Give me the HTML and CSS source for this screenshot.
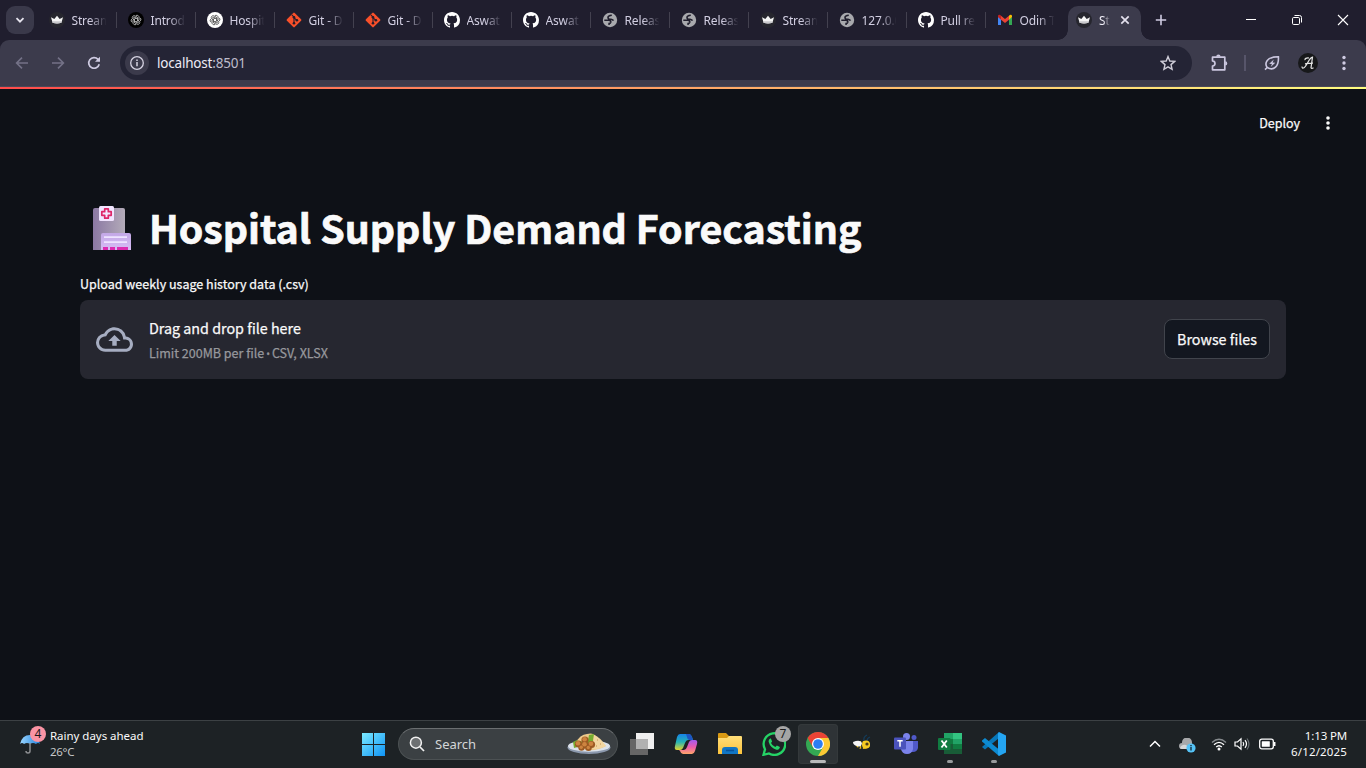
FILE: index.html
```html
<!DOCTYPE html>
<html lang="en">
<head>
<meta charset="utf-8">
<title>Hospital Supply Demand Forecasting</title>
<link rel="stylesheet" href="styles.css">
</head>
<body>
<svg class="defs" width="0" height="0">
  <defs>
    <linearGradient id="win" x1="0" y1="0" x2="1" y2="1"><stop offset="0" stop-color="#7beaff"/><stop offset="1" stop-color="#0f93f5"/></linearGradient>
    <linearGradient id="tower" x1="0" y1="0" x2="1" y2="0"><stop offset="0" stop-color="#8b78a3"/><stop offset="1" stop-color="#b3abb9"/></linearGradient>
    <linearGradient id="wing" x1="0" y1="0" x2="0" y2="1"><stop offset="0" stop-color="#c3a8e6"/><stop offset="1" stop-color="#d6bcf5"/></linearGradient>
    <linearGradient id="copA" x1="0" y1="0" x2="0" y2="1"><stop offset="0" stop-color="#1683e8"/><stop offset=".5" stop-color="#25b3b5"/><stop offset="1" stop-color="#e4d52c"/></linearGradient>
    <linearGradient id="copB" x1="0" y1="0" x2="0" y2="1"><stop offset="0" stop-color="#a35af1"/><stop offset=".5" stop-color="#ea5bad"/><stop offset="1" stop-color="#ffa568"/></linearGradient>
    <linearGradient id="fold" x1="0" y1="0" x2="0" y2="1"><stop offset="0" stop-color="#ffdf7a"/><stop offset="1" stop-color="#fcc33c"/></linearGradient>
    <linearGradient id="umb" x1="0" y1="0" x2="1" y2="0"><stop offset="0" stop-color="#9bd6ff"/><stop offset="1" stop-color="#2283dc"/></linearGradient>
  </defs>
  <symbol id="crown" viewBox="0 0 16 16"><circle cx="8" cy="8" r="8" fill="#26262e"/><path d="M2 5.2 5.3 7 8 3.8 10.7 7 14 5.2 12.4 10.8Q8 12 3.6 10.8Z" fill="#f5f5f5"/><path d="M3.2 9.3h9.6l-.4 1.5Q8 12 3.6 10.8Z" fill="#c9c9cc"/></symbol>
  <symbol id="knot" viewBox="0 0 16 16"><g fill="none" stroke="currentColor" stroke-width=".9"><path id="petal" d="M8 2.6C10 1.8 11.8 3.2 11.6 5.2L11.6 8.2 8 10.3"/><use href="#petal" transform="rotate(60 8 8)"/><use href="#petal" transform="rotate(120 8 8)"/><use href="#petal" transform="rotate(180 8 8)"/><use href="#petal" transform="rotate(240 8 8)"/><use href="#petal" transform="rotate(300 8 8)"/></g></symbol>
  <symbol id="gpt-dark" viewBox="0 0 16 16"><circle cx="8" cy="8" r="8" fill="#000"/><g color="#ddd" transform="translate(1.3 1.3) scale(.84)"><use href="#knot" width="16" height="16"/></g></symbol>
  <symbol id="gpt-light" viewBox="0 0 16 16"><circle cx="8" cy="8" r="8" fill="#fff"/><g color="#333" transform="translate(1.3 1.3) scale(.84)"><use href="#knot" width="16" height="16"/></g></symbol>
  <symbol id="git" viewBox="0 0 16 16"><rect x="2.5" y="2.5" width="11" height="11" rx="1" transform="rotate(45 8 8)" fill="#f8502a"/><path d="M5.8 2.8 8 5v6.3M8 5.6l2.800 2.800" stroke="#241c2b" stroke-width="1.1" fill="none"/><circle cx="8" cy="5.2" r="1.3" fill="#241c2b"/><circle cx="8" cy="11.2" r="1.3" fill="#241c2b"/><circle cx="10.9" cy="8.2" r="1.3" fill="#241c2b"/></symbol>
  <symbol id="github" viewBox="0 0 16 16"><path fill="#fff" d="M8 0C3.58 0 0 3.58 0 8c0 3.54 2.29 6.53 5.47 7.59.4.07.55-.17.55-.38v-1.49c-2.01.37-2.53-.49-2.69-.94-.09-.23-.48-.94-.82-1.13-.28-.15-.68-.52-.01-.53.63-.01 1.08.58 1.23.82.72 1.21 1.87.87 2.33.66.07-.52.28-.87.51-1.07-1.78-.2-3.64-.89-3.64-3.95 0-.87.31-1.59.82-2.15-.08-.2-.36-1.02.08-2.12 0 0 .67-.21 2.2.82a7.6 7.6 0 0 1 4 0c1.53-1.04 2.2-.82 2.2-.82.44 1.1.16 1.92.08 2.12.51.56.82 1.27.82 2.15 0 3.07-1.87 3.75-3.65 3.95.29.25.54.73.54 1.48v2.2c0 .21.15.46.55.38A8.01 8.01 0 0 0 16 8c0-4.42-3.58-8-8-8z"/></symbol>
  <symbol id="globe" viewBox="0 0 16 16"><circle cx="8" cy="8" r="7.200" fill="#a8a9ad"/><path d="M9.600 2.300 6.600 3.800Q5.800 5.800 8 6.300l2.600.6 1.200 1.500 1.900-.6Q14 3.600 9.600 2.300z" fill="#a8a9ad"/><path d="M9.800 3.200Q6 3.400 6 5.500t3 1.800q2 .4 2.500 1.400M2.300 8.300h4.500q2.200.200 2 1.900-.200 1.200-1.700 1.300V13" fill="none" stroke="#201e2d" stroke-width="1.600"/></symbol>
  <symbol id="gmail" viewBox="0 0 16 16"><path d="M1 5v8h3V6z" fill="#4285f4"/><path d="M12 6v7h3V5z" fill="#34a853"/><path d="M4 3.800 8 7l4-3.200v4L8 11 4 7.800z" fill="#ea4335"/><path d="M1 5V4q.3-2 2.400-1L4 3.800v4z" fill="#c5221f"/><path d="M15 5V4q-.3-2-2.400-1L12 3.800v4z" fill="#fbbc04"/></symbol>
</svg>

<header class="tabstrip">
  <button class="tabsearch"><svg width="12" height="12" viewBox="0 0 12 12"><path d="M2.500 4.200 6 7.700l3.500-3.500" fill="none" stroke="#e6e4ee" stroke-width="1.800"/></svg></button>
  <nav class="tabs">
    <div class="tab"><svg class="fav"><use href="#crown"/></svg><span>Stream</span></div>
    <div class="tab"><svg class="fav"><use href="#gpt-dark"/></svg><span>Introd</span></div>
    <div class="tab"><svg class="fav"><use href="#gpt-light"/></svg><span>Hospit</span></div>
    <div class="tab"><svg class="fav"><use href="#git"/></svg><span>Git - D</span></div>
    <div class="tab"><svg class="fav"><use href="#git"/></svg><span>Git - D</span></div>
    <div class="tab"><svg class="fav"><use href="#github"/></svg><span>Aswat</span></div>
    <div class="tab"><svg class="fav"><use href="#github"/></svg><span>Aswat</span></div>
    <div class="tab"><svg class="fav"><use href="#globe"/></svg><span>Releas</span></div>
    <div class="tab"><svg class="fav"><use href="#globe"/></svg><span>Releas</span></div>
    <div class="tab"><svg class="fav"><use href="#crown"/></svg><span>Stream</span></div>
    <div class="tab"><svg class="fav"><use href="#globe"/></svg><span>127.0.0</span></div>
    <div class="tab"><svg class="fav"><use href="#github"/></svg><span>Pull re</span></div>
    <div class="tab last"><svg class="fav"><use href="#gmail"/></svg><span>Odin T</span></div>
    <div class="tab active"><svg class="fav"><use href="#crown"/></svg><span>St</span><svg class="close" viewBox="0 0 10 10"><path d="M1.300 1.300l7.400 7.400M8.700 1.300 1.300 8.700" stroke="#e4e1ee" stroke-width="1.700"/></svg></div>
  </nav>
  <svg class="plus" viewBox="0 0 12 12"><path d="M6 .8v10.400M.8 6h10.400" stroke="#cfcbe2" stroke-width="1.600"/></svg>
  <div class="wincontrols">
    <svg width="12" height="12" viewBox="0 0 12 12"><path d="M1 5.500h10" stroke="#fff"/></svg>
    <svg width="12" height="12" viewBox="0 0 12 12"><rect x="1.500" y="3.500" width="7" height="7" rx="1.200" fill="none" stroke="#fff"/><path d="M3.500 1.500h5q2 0 2 2v5" fill="none" stroke="#fff"/></svg>
    <svg width="12" height="12" viewBox="0 0 12 12"><path d="M1 1l10 10M11 1 1 11" stroke="#fff" stroke-width="1.100"/></svg>
  </div>
</header>

<div class="toolbarwrap"><div class="toolbar">
  <svg class="nav" viewBox="0 0 16 16"><path d="M14 8H3M8 2.600 2.600 8 8 13.400" fill="none" stroke="#747287" stroke-width="1.600"/></svg>
  <svg class="nav" viewBox="0 0 16 16"><path d="M2 8h11M8 2.600 13.400 8 8 13.400" fill="none" stroke="#747287" stroke-width="1.600"/></svg>
  <svg class="nav" viewBox="0 0 16 16"><path d="M13.200 9.200A5.300 5.300 0 1 1 12 4.400L13.200 5.800" fill="none" stroke="#cfcbe2" stroke-width="1.700"/><path d="M14 1.800v5H9z" fill="#cfcbe2"/></svg>
  <div class="omnibox">
    <span class="info"><svg width="16" height="16" viewBox="0 0 16 16"><circle cx="8" cy="8" r="6.300" fill="none" stroke="#d6d3e2" stroke-width="1.300"/><path d="M8 7v4.300M8 4.400v1.500" stroke="#d6d3e2" stroke-width="1.500"/></svg></span>
    <span class="url">localhost<i>:8501</i></span>
    <svg class="star" viewBox="0 0 16 16"><path d="M8 1.600 9.800 6l4.900.4-3.700 3.200 1.100 4.700L8 11.800l-4.100 2.500L5 9.600 1.300 6.400 6.200 6z" fill="none" stroke="#cfcdd8" stroke-width="1.400"/></svg>
  </div>
  <svg class="ext" viewBox="0 0 18 18"><path d="M2.500 3.200h12.300v12.600H2.500v-3.700q2.500-.4 2.500-2.600T2.500 6.900z" fill="none" stroke="#cbc7df" stroke-width="1.700" stroke-linejoin="round"/><path d="M6.200 2.800a2.200 2.200 0 0 1 4.400 0zM15.200 7.300a2.100 2.100 0 0 1 0 4.200z" fill="#cbc7df"/></svg>
  <span class="sep"></span>
  <svg class="leaf" viewBox="0 0 16 16"><path d="M1 14.600 3.200 12.500M3.200 12.500C.2 8.200 2.600 1.600 14.400 1.800 15 11.500 9.800 16.200 3.200 12.500z" fill="none" stroke="#cbc7df" stroke-width="1.600"/><path d="M9.800 4.600 5.200 8.700l2.700.4-1.200 2.900 4.600-4.200-2.700-.4z" fill="#cbc7df"/></svg>
  <span class="avatar"><svg width="16" height="16" viewBox="0 0 16 16"><path d="M2 11.500q0 2.300 2 1.200C7 11 9 2.500 12.500 2.200L11 12.800q.5 1.200 2.500 0M5 8.800q4-.8 8-.6M5 5.200Q4.500 2.600 9 3" fill="none" stroke="#e5e5e5" stroke-width="1.200"/></svg></span>
  <svg class="dots" viewBox="0 0 4 16"><circle cx="2" cy="2.500" r="1.700"/><circle cx="2" cy="8" r="1.700"/><circle cx="2" cy="13.500" r="1.700"/></svg>
</div></div>

<main class="app">
  <div class="decoration"></div>
  <div class="appbar"><span class="deploy">Deploy</span><svg class="menu" viewBox="0 0 4 14"><circle cx="2" cy="2" r="1.800"/><circle cx="2" cy="7" r="1.800"/><circle cx="2" cy="12" r="1.800"/></svg></div>
  <section class="content">
    <h1><svg class="hospital" viewBox="0 0 39 44"><path d="M1 4q0-2 2-2h28q2 0 2 2v40H1z" fill="url(#tower)"/><path d="M9 44V29q0-2 2-2h26q2 0 2 2v15z" fill="url(#wing)"/><rect x="7" y="0" width="15" height="15" rx="1.500" fill="#f1e5ff"/><path d="M12.700 2.800h3.600v2.900h2.900v3.600h-2.900v2.900h-3.600V9.300H9.800V5.700h2.900z" fill="none" stroke="#de2669" stroke-width="1.700" stroke-linejoin="round"/><path d="M12 31.200h23M12 36.200h23" stroke="#eee3ff" stroke-width="1.800"/><path d="M11 41h5v3h-5zM18 41h5v3h-5zM25 41h11v3H25z" fill="#dc2bb0"/></svg><span>Hospital Supply Demand Forecasting</span></h1>
    <label class="label">Upload weekly usage history data (.csv)</label>
    <div class="dropzone">
      <svg class="cloud" viewBox="0 0 24 24"><path d="M19.350 10.040A7.490 7.490 0 0 0 12 4C9.110 4 6.600 5.640 5.350 8.040A5.994 5.994 0 0 0 0 14c0 3.310 2.690 6 6 6h13c2.760 0 5-2.240 5-5 0-2.640-2.050-4.780-4.650-4.960zM19 18H6c-2.210 0-4-1.790-4-4 0-2.050 1.530-3.760 3.560-3.970l1.070-.110.500-.950A5.469 5.469 0 0 1 12 6c2.620 0 4.880 1.860 5.390 4.430l.300 1.500 1.530.110A2.980 2.980 0 0 1 22 15c0 1.650-1.350 3-3 3zM8 13h2.550v3h2.900v-3H16l-4-4z"/></svg>
      <div class="hint"><span class="drag">Drag and drop file here</span><span class="limit">Limit 200MB per file <i>•</i> CSV, XLSX</span></div>
      <button class="browse">Browse files</button>
    </div>
  </section>
</main>

<footer class="taskbar">
  <div class="weather">
    <div class="umbrella"><svg width="20" height="20" viewBox="0 0 20 20"><path d="M0 10Q2 1 10 1t10 9q-2-2-4 0-3-2-6 0-3-2-6 0-2-2-4 0z" fill="url(#umb)"/><path d="M10 9v8q0 2-2 2t-2-2" fill="none" stroke="#8b8d90" stroke-width="1.500"/></svg><b class="badge pink">4</b></div>
    <div class="wtext"><span>Rainy days ahead</span><span class="dim">26°C</span></div>
  </div>
  <div class="center">
    <svg class="start" viewBox="0 0 23 23"><path d="M0 0h11v11H0zM12 0h11v11H12zM0 12h11v11H0zM12 12h11v11H12z" fill="url(#win)"/></svg>
    <div class="search">
      <svg width="16" height="16" viewBox="0 0 16 16"><circle cx="6.900" cy="6.700" r="5.500" fill="#6d7072" stroke="#f2f2f2" stroke-width="1.500"/><path d="M11 11l4 4" stroke="#f2f2f2" stroke-width="1.700"/></svg>
      <span>Search</span>
      <svg class="food" viewBox="0 0 44 22"><ellipse cx="22" cy="14.500" rx="21.500" ry="6.500" fill="#8b98ad"/><ellipse cx="22" cy="13" rx="21" ry="5.800" fill="#dce2ea"/><path d="M8 11Q13 1 20 1q6-2 10 3l9 9q-8 5-20 4z" fill="#edc98b"/><path d="M7 15 6 9l4-2 2 2 9-2 1-5 5-1-1 7-4 3z" fill="#76ad30"/><path d="M27 2q6 2 12 11-7 4-13 3z" fill="#f2d6a0"/><g fill="#9c5a23"><circle cx="18" cy="7" r="3.600"/><circle cx="11.500" cy="11" r="3.600"/><circle cx="18" cy="12" r="3.600"/><circle cx="24.500" cy="11.500" r="3.600"/><circle cx="14.500" cy="14.500" r="3.200"/><circle cx="21.500" cy="14.800" r="3.300"/></g><g fill="#cd8440"><circle cx="17.600" cy="6.300" r="2.300"/><circle cx="11" cy="10.300" r="2.300"/><circle cx="24" cy="10.800" r="2.300"/><circle cx="17.500" cy="11.300" r="2.300"/><circle cx="14.200" cy="14.200" r="1.700"/><circle cx="21.300" cy="14.500" r="1.700"/></g><path d="M30 7h1M33 11h1M29 13h1" stroke="#c6924c"/></svg>
    </div>
    <div class="apps">
      <div class="icon"><svg viewBox="0 0 24 24"><path d="M6 1h18v16H6z" fill="#efefef"/><path d="M0 7h18v16H0z" fill="#666"/><path d="M6 7h12v10H6z" fill="#b1b1b1"/></svg></div>
      <div class="icon"><svg viewBox="0 0 24 24"><path d="M6 2h9q2 0 3 3l1 3h-5q-2 0-3 3l-2 5q-1 2-3 2H3q-3 0-2-4L3 5q1-3 3-3z" fill="url(#copA)"/><path d="M12 2h3q2 0 3 3l1 3h-4q-2-1-2-3z" fill="#1d55c2"/><path d="M18 22H9q-2 0-3-3l-1-1h5q2 0 3-3l2-5q1-2 3-2h3q3 0 2 4l-2 7q-1 3-3 3z" fill="url(#copB)"/></svg></div>
      <div class="icon"><svg viewBox="0 0 24 24"><path d="M0 2q0-1 1-1h7l3 3h12v7H0z" fill="#d99a13"/><path d="M0 6h9l2-2h12q1 0 1 1v17H0z" fill="url(#fold)"/><path d="M4 22v-4q0-3 3-3h10q3 0 3 3v4z" fill="#1176c4"/><path d="M8 18.500h8" stroke="#07529b" stroke-width="1.500"/></svg></div>
      <div class="icon"><svg viewBox="0 0 24 24"><path d="M1.500 22.800 3 17.300A10.800 10.800 0 1 1 7 21.400z" fill="none" stroke="#25d366" stroke-width="2.300"/><path d="M8.300 6.500q-2 1-1.700 3.200 1.700 6 7.800 8 3 .3 3.500-2.800l-3-1.500-1.600 1.600q-3-1.200-4.300-4.100l1.100-1.500-1.200-2.900z" fill="#25d366"/></svg><b class="badge gray">7</b></div>
      <div class="icon current"><svg viewBox="0 0 24 24"><circle cx="12" cy="12" r="12" fill="#34a853"/><path d="M12 6h10.400A12 12 0 0 1 12 24l5.200-9z" fill="#fcc934"/><path d="M12 6h10.400A12 12 0 0 0 1.600 6l5.200 9z" fill="#ea4335"/><circle cx="12" cy="12" r="6" fill="#fff"/><circle cx="12" cy="12" r="4.800" fill="#2b7df3"/></svg><i class="mark wide"></i></div>
      <div class="icon"><svg viewBox="0 0 24 24"><path d="M14 9q-1-4 3-6M17 9q0-3 3-4" fill="none" stroke="#143b58" stroke-width="1.300"/><ellipse cx="13" cy="13" rx="7" ry="4" fill="#edbd16"/><path d="M9 10v6M12 9v8" stroke="#1d2830" stroke-width="1.700"/><path d="M3 10q7-3 9 1-1 5-5 3-4-1-4-4z" fill="#f4f5f6"/><circle cx="16" cy="12.500" r="4" fill="#f5cb22"/><circle cx="17" cy="12" r="1.600" fill="#4a3b18"/></svg></div>
      <div class="icon"><svg viewBox="0 0 24 24"><circle cx="12.500" cy="4.500" r="3.500" fill="#7b83eb"/><circle cx="20" cy="5.500" r="2.500" fill="#5059c9"/><path d="M16 9h8v7q-1 4-5 4h-3z" fill="#5059c9"/><path d="M7 9h12v8q-1 5-6 5t-6-5z" fill="#7b83eb"/><rect x="0" y="5.500" width="12" height="12" rx="1" fill="#4b53bc"/><path d="M3.300 8.800h5.400M6 8.800v6" stroke="#fff" stroke-width="1.500"/></svg></div>
      <div class="icon"><svg viewBox="0 0 24 24"><path d="M6 1h18v21H6z" fill="#185c37"/><path d="M6 1h9v6H6z" fill="#21a366"/><path d="M15 1h9v6h-9z" fill="#33c481"/><path d="M6 7h9v5H6z" fill="#107c41"/><path d="M15 7h9v5h-9z" fill="#21a366"/><path d="M15 12h9v5h-9z" fill="#107c41"/><rect x="0" y="6" width="12.500" height="12" rx="1" fill="#107c41"/><path d="M3.500 8.500l5.300 7M8.800 8.500l-5.300 7" stroke="#fff" stroke-width="1.800"/></svg><i class="mark"></i></div>
      <div class="icon"><svg viewBox="0 0 24 24"><path d="M17 0v6L3 17.500 0 15z" fill="#0877b9"/><path d="M0 8.500 3 6l14 11.500V24L0 9.500z" fill="#0d8bd2"/><path d="M17 0l7 3.500v17L17 24q-1-1-1-2V2q0-1 1-2z" fill="#24a5f2"/></svg><i class="mark"></i></div>
    </div>
  </div>
  <div class="tray">
    <svg class="chev" viewBox="0 0 12 12"><path d="M1 8.500 6 3.500l5 5" fill="none" stroke="#fff" stroke-width="1.500"/></svg>
    <svg class="onedrive" viewBox="0 0 17 15"><path d="M3 11a3 3 0 0 1 0-6 5 5 0 0 1 10-1v7z" fill="#a6a8aa"/><path d="M1 10q2-4 6-3l5 4H3q-2 0-2-1z" fill="#d6d7d8"/><circle cx="12" cy="10" r="4.600" fill="#55c3f7"/><path d="M12 9v3.600M12 6.900v1.300" stroke="#14303f" stroke-width="1.400"/></svg>
    <svg class="wifi" viewBox="0 0 16 14"><g fill="none" stroke="#fff" stroke-width="1.300"><path d="M1 5.500q7-6.500 14 0" stroke="#868b8e"/><path d="M3 7.700q5-4.700 10 0M5.200 10q2.800-2.600 5.600 0"/></g><circle cx="8" cy="12" r="1.500" fill="#fff"/></svg>
    <svg class="vol" viewBox="0 0 16 14"><g fill="none" stroke="#fff" stroke-width="1.200"><path d="M1 5h2.500L7 1.800v10.400L3.500 9H1z"/><path d="M9 5q1.500 2 0 4M11 3.200q3 3.800 0 7.600"/><path d="M13 1.500q4 5.500 0 11" stroke="#696f73"/></g></svg>
    <svg class="bat" viewBox="0 0 17 12"><rect x=".7" y="1.200" width="13.600" height="9.600" rx="2" fill="none" stroke="#fff" stroke-width="1.300"/><rect x="2.800" y="3.200" width="8" height="5.600" rx=".5" fill="#fff"/><path d="M15.700 4v4" stroke="#fff" stroke-width="1.500"/></svg>
    <div class="clock"><span>1:13 PM</span><span class="date">6/12/2025</span></div>
  </div>
</footer>
</body>
</html>
```
FILE: styles.css
```css
* { box-sizing: border-box; }
body {
  margin: 0; width: 1366px; height: 768px; overflow: hidden;
  display: flex; flex-direction: column;
  background: #0e1117; color: #fafafa;
  font-family: "Noto Sans", sans-serif;
}
button { border: 0; padding: 0; margin: 0; }
svg { flex: none; display: block; }
.defs { position: absolute; }

.tabstrip { height: 40px; flex: none; display: flex; background: #201e2e; }
.tabsearch { width: 28px; height: 28px; margin: 6px 4px 0 6px; border-radius: 9px; background: #3a394a; display: grid; place-items: center; }
.tabs { display: flex; height: 40px; }
.tab { width: 79px; height: 40px; display: flex; align-items: center; padding: 0 0 0 10.500px; background: linear-gradient(#43414f, #43414f) 78px 12px / 2px 16px no-repeat; }
.tab:last-child, .tab.last { background: none; }
.fav { width: 16px; height: 16px; margin-right: 7px; }
.tab span {
  width: 38px; padding-top: 1px; white-space: nowrap; font-size: 12px; line-height: 18px; letter-spacing: -.15px;
  color: #d2cfe2;
  -webkit-mask-image: linear-gradient(90deg, #000 18px, transparent 34.500px);
  mask-image: linear-gradient(90deg, #000 18px, transparent 34.500px);
}
.tab.last { width: 79px; padding-left: 10.500px; }
.tab.active { position: relative; margin: 6px 0 0 3px; width: 73px; height: 34px; padding: 0 0 6px 8px; border-radius: 10px 10px 0 0; background: #3c3b4c; }
.tab.active::before, .tab.active::after { content: ""; position: absolute; bottom: 0; width: 10px; height: 10px; }
.tab.active::before { left: -10px; background: radial-gradient(circle at 0 0, transparent 9.500px, #3c3b4c 10px); }
.tab.active::after { right: -10px; background: radial-gradient(circle at 100% 0, transparent 9.500px, #3c3b4c 10px); }
.tab.active span { width: 14px; margin-right: 7px; color: #f0eef7; -webkit-mask-image: linear-gradient(90deg, #000 4px, transparent 11px); mask-image: linear-gradient(90deg, #000 4px, transparent 11px); }
.close { width: 10px; height: 10px; }
.plus { width: 12px; height: 12px; margin: 14px 0 0 14px; }
.wincontrols { margin: 14px 17px 0 auto; display: flex; gap: 34px; }

.toolbarwrap { flex: none; height: 47px; background: #201e2e; }
.toolbar { height: 47px; border-radius: 9px 9px 0 0; background: #3c3b4c; border-bottom: 1px solid #4a4857; display: flex; align-items: center; padding-left: 14px; }
.nav { width: 16px; height: 16px; margin-right: 20px; }
.omnibox { width: 1072px; height: 34px; margin-left: -2px; border-radius: 17px; background: #242435; display: flex; align-items: center; padding: 0 16px 0 5px; }
.info { width: 24px; height: 24px; border-radius: 50%; background: #3b3a4b; display: grid; place-items: center; }
.url { margin-left: 8px; font-size: 13.500px; letter-spacing: -.2px; line-height: 20px; color: #edebf5; }
.url i { font-style: normal; color: #bebccb; }
.star { width: 16px; height: 16px; margin-left: auto; }
.ext { width: 18px; height: 18px; margin-left: 18px; }
.sep { width: 2px; height: 16px; margin-left: 16px; background: #57556a; }
.leaf { width: 16px; height: 16px; margin-left: 18px; }
.avatar { width: 20px; height: 20px; margin-left: 18px; border-radius: 50%; background: #17181a; display: grid; place-items: center; }
.dots { width: 4px; height: 16px; margin-left: 24px; fill: #cfcbe2; }

.app { flex: 1; min-height: 0; font-family: "Noto Sans CJK SC", "Source Sans Pro", sans-serif; -webkit-text-stroke: .25px currentColor; }
.decoration { height: 2px; background: linear-gradient(90deg, #ff4b4b, #fffd80); }
.appbar { height: 68px; display: flex; justify-content: flex-end; align-items: center; padding-right: 36px; }
.deploy { font-size: 12.500px; line-height: 20px; letter-spacing: 0; }
.menu { width: 4px; height: 14px; margin-left: 26px; fill: #fafafa; }
.content { padding: 46px 80px 0; }
h1 { margin: 0; height: 57px; padding-left: 12px; display: flex; font-size: 39.350px; line-height: 48px; font-weight: 700; white-space: nowrap; -webkit-text-stroke: .7px currentColor; }
.hospital { width: 39px; height: 44px; margin: 3px 18px 0 0; }
.label { display: block; margin: 14px 0 6px; font-size: 12.530px; line-height: 20px; height: 20px; }
.dropzone { height: 79px; border-radius: 8px; background: #262730; display: flex; align-items: center; padding: 0 16px; }
.cloud { width: 37px; height: 37px; fill: #a6adc1; }
.hint { margin-left: 16px; display: flex; flex-direction: column; }
.drag { font-size: 14.300px; line-height: 26px; }
.limit { font-size: 12.530px; line-height: 24px; color: #97989d; }
.limit i { font: 10px/1 "Open Sans", sans-serif; margin: 0 -.8px; }
.browse { margin: 0 0 1px auto; width: 106px; height: 40px; border: 1px solid #41444c; border-radius: 8px; background: #131720; color: #fafafa; font: 14.300px/26px "Noto Sans CJK SC", sans-serif; -webkit-text-stroke: .25px currentColor; }

.taskbar { flex: none; height: 48px; border-top: 1px solid #3c4144; background: #1d2225; display: flex; }
.weather { display: flex; padding: 5px 0 0 20px; width: 361px; }
.umbrella { position: relative; width: 20px; margin: 8px 10px 0 0; }
.badge { position: absolute; width: 16px; height: 16px; border-radius: 50%; font: 12px/16px "Noto Sans", sans-serif; text-align: center; color: #1a1a1a; }
.pink { left: 10px; top: -8px; background: #fa94a4; }
.gray { left: 21px; top: 2px; background: #a5a5a5; }
.wtext { display: flex; flex-direction: column; font-size: 11.500px; line-height: 16px; letter-spacing: -.03px; padding-top: 2px; }
.dim { color: #c7c9ca; letter-spacing: -.3px; }
.center { display: flex; align-items: center; padding-bottom: 1px; }
.start { width: 23px; height: 23px; margin: 1px 0 0 1px; }
.search { width: 220px; height: 32px; margin: 0 4px 0 13px; padding: 0 6px 0 10px; border: 1px solid #4c5153; border-top-color: #6b6f71; border-radius: 16px; background: #3b4043; display: flex; align-items: center; }
.search span { font-size: 13px; margin-left: 10px; color: #d4d6d7; }
.food { width: 44px; height: 22px; margin-left: auto; }
.apps { display: flex; gap: 4px; }
.icon { position: relative; width: 40px; height: 40px; border-radius: 4px; display: grid; place-items: center; }
.icon svg { width: 24px; height: 24px; }
.current { background: #2e3336; box-shadow: inset 0 0 0 1px #34393b; }
.mark { position: absolute; bottom: 1px; left: 17px; width: 6px; height: 3px; border-radius: 2px; background: #989b9d; }
.mark.wide { left: 12px; width: 16px; background: #b8b9ba; }
.tray { margin-left: auto; display: flex; align-items: center; padding: 0 19px 1px 0; }
.chev { width: 12px; height: 12px; margin-right: 18px; }
.onedrive { width: 17px; height: 15px; margin: 3px 15px 0 0; }
.wifi { width: 16px; height: 14px; margin-right: 7px; }
.vol { width: 16px; height: 14px; margin-right: 9px; }
.bat { width: 17px; height: 12px; margin-right: 13px; }
.clock { width: 58px; display: flex; flex-direction: column; align-items: flex-end; font-size: 11.500px; line-height: 16px; letter-spacing: -.15px; white-space: nowrap; }
.date { letter-spacing: .15px; }
```
